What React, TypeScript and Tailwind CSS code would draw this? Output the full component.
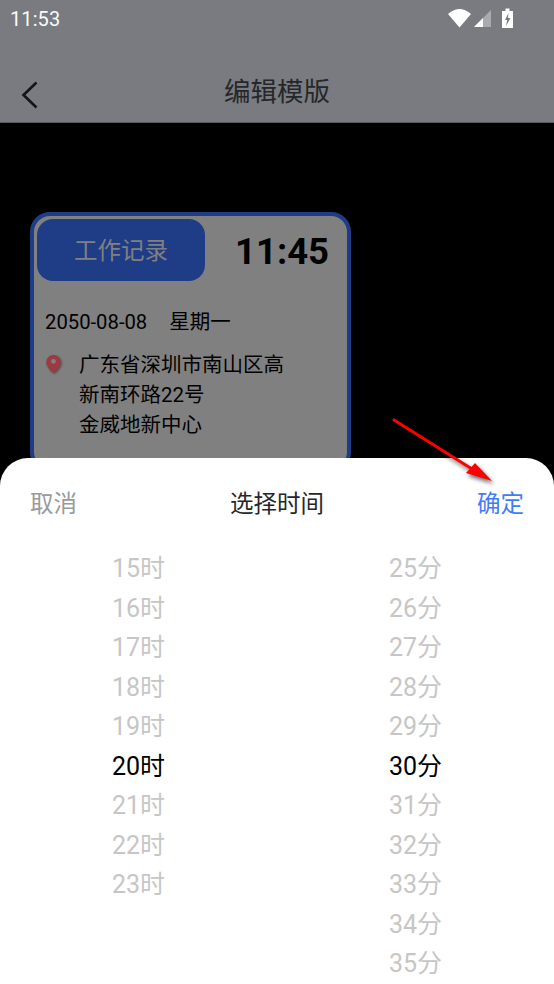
export default function App() {
  const hours = ["15时", "16时", "17时", "18时", "19时", "20时", "21时", "22时", "23时"];
  const mins = ["25分", "26分", "27分", "28分", "29分", "30分", "31分", "32分", "33分", "34分", "35分"];
  const font = { fontFamily: 'Roboto, "Noto Sans CJK SC", sans-serif' };
  const Col = ({ items, active }: { items: string[]; active: string }) => (
    <div className="flex-1 flex flex-col items-center">
      {items.map((t) => (
        <div key={t} className={`h-[39.500px] leading-[39.500px] text-[25px] ${t === active ? "text-black" : "text-[#c6c6c6]"}`}>{t}</div>
      ))}
    </div>
  );
  return (
    <div className="relative w-[554px] h-[984px] overflow-hidden flex flex-col bg-black" style={font}>
      <div className="h-[123px] shrink-0 bg-[#797b80] border-b border-[#5a5b5e] flex flex-col">
        <div className="h-[38px] shrink-0 flex items-center justify-between pl-[10px] pr-[41px] relative">
          <span className="text-[#fafafa] text-[20px] leading-none tracking-[0.1px]">11:53</span>
          <svg className="absolute left-[440px] top-0" width="80" height="38" viewBox="440 0 80 38">
            <path d="M448 14C452 10.500 456 9 459.500 9C463 9 467 10.500 471 14L459.500 27.500Z" fill="#fff" />
            <path d="M474 27L491 10V27Z" fill="#a9abae" />
            <path d="M474 27L483 18V27Z" fill="#fff" />
            <path d="M502 11H505.500V8.500H509.500V11H513V28H502Z" fill="#fff" />
            <path d="M508.500 13L505 20H507.200L506 26L510.500 18H508Z" fill="#797b80" />
          </svg>
        </div>
        <div className="relative flex-1 flex items-center justify-center">
          <svg className="absolute left-[21px] top-[43px]" width="18" height="28" viewBox="0 0 18 28" fill="none">
            <path d="M15.500 1.500L2.500 14L15.500 26.500" stroke="#141414" strokeWidth="2.600" />
          </svg>
          <span className="text-[#26272a] text-[26.500px] leading-none mt-[25px]">编辑模版</span>
        </div>
      </div>

      <div className="h-[335px] shrink-0 overflow-hidden pt-[89px] pl-[30px]">
        <div className="w-[321px] h-[260px] rounded-[20px] border-[4px] border-[#1f3c87] bg-[#808080] pt-[3px] pl-[3px]">
          <div className="flex items-center">
            <div className="w-[168px] h-[62px] rounded-[16px] bg-[#1f3c87] flex items-center justify-center pt-[3px] text-[23.500px] text-[#808080]">工作记录</div>
            <span className="ml-[30px] mt-[4px] text-[36.500px] leading-none font-bold text-black">11:45</span>
          </div>
          <div className="mt-[26px] ml-[8px] text-[20.250px] leading-[30px] text-black whitespace-pre">2050-08-08<span className="ml-[22px] text-[20.500px]">星期一</span></div>
          <div className="mt-[13px] ml-[8px] flex">
            <svg className="mt-[4px] shrink-0 drop-shadow-[1px_1px_1px_rgba(0,0,0,0.4)]" width="17" height="20" viewBox="0 0 18 22">
              <path d="M9 1C4.600 1 1 4.500 1 9C1 14 6 18.500 9 21C12 18.500 17 14 17 9C17 4.500 13.400 1 9 1Z" fill="#9c3a42" />
              <circle cx="9" cy="8" r="2.600" fill="#808080" />
            </svg>
            <div className="ml-[17px] text-[20.500px] leading-[30px] text-black w-[230px]">广东省深圳市南山区高<br />新南环路22号<br />金威地新中心</div>
          </div>
        </div>
      </div>

      <div className="flex-1 bg-white rounded-t-[28px] flex flex-col">
        <div className="h-[91px] shrink-0 flex items-center justify-between px-[30px] pt-[2px] text-[23.500px]">
          <span className="text-[#9a9a9a] w-[60px]">取消</span>
          <span className="text-[#26272a]">选择时间</span>
          <span className="text-[#3f7cf6] w-[60px] text-right">确定</span>
        </div>
        <div className="flex">
          <div className="w-[277px] flex"><Col items={hours} active="20时" /></div>
          <div className="w-[277px] flex"><Col items={mins} active="30分" /></div>
        </div>
      </div>

      <svg className="absolute left-[385px] top-[410px] drop-shadow-[2px_3px_2px_rgba(0,0,0,0.6)]" width="120" height="85" viewBox="385 410 120 85">
        <path d="M394 420L472 469" stroke="#ff0000" strokeWidth="3" strokeLinecap="round" />
        <path d="M492 481L475 463L466 473Z" fill="#ff0000" />
      </svg>
    </div>
  );
}
